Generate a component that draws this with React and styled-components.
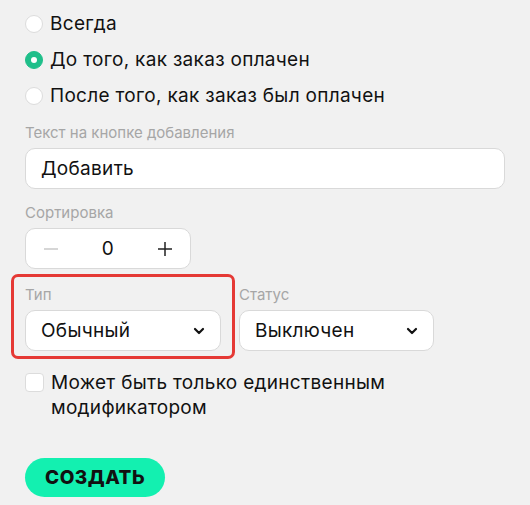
import React, { useState } from "react";
import styled, { createGlobalStyle } from "styled-components";

const GlobalStyle = createGlobalStyle`
  html, body {
    margin: 0;
    padding: 0;
    background: #f1f1f1;
  }
  body {
    font-family: Inter, "Noto Sans", sans-serif;
    color: #111;
  }
`;

const Page = styled.div`
  width: 530px;
  height: 505px;
  box-sizing: border-box;
  padding: 14px 25px 0 25px;
  display: flex;
  flex-direction: column;
`;

const RadioList = styled.div`
  display: flex;
  flex-direction: column;
  gap: 16px;
  margin-bottom: 17px;
`;

const RadioRow = styled.label`
  display: flex;
  align-items: center;
  gap: 7px;
  font-size: 19px;
  letter-spacing: 0.3px;
  line-height: 20px;
  cursor: pointer;
`;

const RadioCircle = styled.span`
  width: 18px;
  height: 18px;
  box-sizing: border-box;
  border-radius: 50%;
  flex-shrink: 0;
  background: ${(p) => (p.$checked ? "#1fbf8a" : "#fff")};
  border: 1px solid ${(p) => (p.$checked ? "#1fbf8a" : "#dcdcdc")};
  display: grid;
  place-items: center;
  &::after {
    content: "";
    width: 6px;
    height: 6px;
    border-radius: 50%;
    background: #fff;
    display: ${(p) => (p.$checked ? "block" : "none")};
  }
`;

const Field = styled.div`
  display: flex;
  flex-direction: column;
  gap: 5px;
  margin-bottom: ${(p) => p.$mb || 0}px;
`;

const Label = styled.div`
  font-size: 15px;
  line-height: 20px;
  color: #a6a6a6;
`;

const Box = styled.div`
  box-sizing: border-box;
  height: 41px;
  width: ${(p) => p.$width || "100%"};
  background: #fff;
  border: 1px solid #d9d9d9;
  border-radius: 10px;
  display: flex;
  align-items: center;
  font-size: 19px;
  letter-spacing: 0.3px;
`;

const TextInput = styled.input`
  border: none;
  outline: none;
  background: transparent;
  font: inherit;
  letter-spacing: inherit;
  color: #111;
  width: 100%;
  padding: 0 15px;
`;

const StepButton = styled.button`
  border: none;
  background: transparent;
  width: 50px;
  height: 100%;
  display: grid;
  place-items: center;
  padding: 0;
  color: ${(p) => (p.$muted ? "#c8c8c8" : "#222")};
  cursor: pointer;
`;

const StepValue = styled.div`
  flex: 1;
  text-align: center;
`;

const Row = styled.div`
  display: flex;
  align-items: flex-start;
  gap: 4px;
  margin: 5px 0 11px -14px;
`;

const Highlight = styled.div`
  border: 3px solid #e53935;
  border-radius: 7px;
  padding: 8px 11px 5px 11px;
`;

const Plain = styled.div`
  padding: 11px 0 0 0;
`;

const SelectBox = styled(Box)`
  justify-content: space-between;
  padding: 0 14px 0 15px;
  cursor: pointer;
`;

const CheckRow = styled.label`
  display: flex;
  align-items: flex-start;
  gap: 7px;
  font-size: 19px;
  letter-spacing: 0.3px;
  line-height: 25px;
  cursor: pointer;
`;

const CheckSquare = styled.span`
  width: 19px;
  height: 19px;
  box-sizing: border-box;
  margin-top: 3px;
  flex-shrink: 0;
  border-radius: 4px;
  background: #fff;
  border: 1px solid #dcdcdc;
`;

const SubmitButton = styled.button`
  margin-top: 38px;
  align-self: flex-start;
  height: 39px;
  padding: 0 20px;
  border: none;
  border-radius: 20px;
  background: #13f0b0;
  color: #111;
  font-family: inherit;
  font-weight: 800;
  font-size: 19px;
  letter-spacing: 0.5px;
  cursor: pointer;
`;

const Chevron = () => (
  <svg width="14" height="14" viewBox="0 0 14 14" fill="none">
    <path d="M3 5l4 4 4-4" stroke="#111" strokeWidth="2.2" strokeLinecap="round" strokeLinejoin="round" />
  </svg>
);

const MinusIcon = () => (
  <svg width="18" height="18" viewBox="0 0 18 18">
    <path d="M2 9h14" stroke="currentColor" strokeWidth="1.5" />
  </svg>
);

const PlusIcon = () => (
  <svg width="18" height="18" viewBox="0 0 18 18">
    <path d="M2 9h14M9 2v14" stroke="currentColor" strokeWidth="1.5" />
  </svg>
);

const options = ["Всегда", "До того, как заказ оплачен", "После того, как заказ был оплачен"];

export default function App() {
  const [mode, setMode] = useState(1);
  const [sort, setSort] = useState(0);
  const [text, setText] = useState("Добавить");

  return (
    <Page>
      <GlobalStyle />
      <RadioList>
        {options.map((o, i) => (
          <RadioRow key={o} onClick={() => setMode(i)}>
            <RadioCircle $checked={mode === i} />
            {o}
          </RadioRow>
        ))}
      </RadioList>

      <Field $mb={14}>
        <Label>Текст на кнопке добавления</Label>
        <Box>
          <TextInput value={text} onChange={(e) => setText(e.target.value)} />
        </Box>
      </Field>

      <Field>
        <Label>Сортировка</Label>
        <Box $width="166px">
          <StepButton $muted={sort <= 0} onClick={() => setSort(Math.max(0, sort - 1))}>
            <MinusIcon />
          </StepButton>
          <StepValue>{sort}</StepValue>
          <StepButton onClick={() => setSort(sort + 1)}>
            <PlusIcon />
          </StepButton>
        </Box>
      </Field>

      <Row>
        <Highlight>
          <Field>
            <Label>Тип</Label>
            <SelectBox $width="196px">
              Обычный
              <Chevron />
            </SelectBox>
          </Field>
        </Highlight>
        <Plain>
          <Field>
            <Label>Статус</Label>
            <SelectBox $width="195px">
              Выключен
              <Chevron />
            </SelectBox>
          </Field>
        </Plain>
      </Row>

      <CheckRow>
        <CheckSquare />
        <span>
          Может быть только единственным
          <br />
          модификатором
        </span>
      </CheckRow>

      <SubmitButton>СОЗДАТЬ</SubmitButton>
    </Page>
  );
}
